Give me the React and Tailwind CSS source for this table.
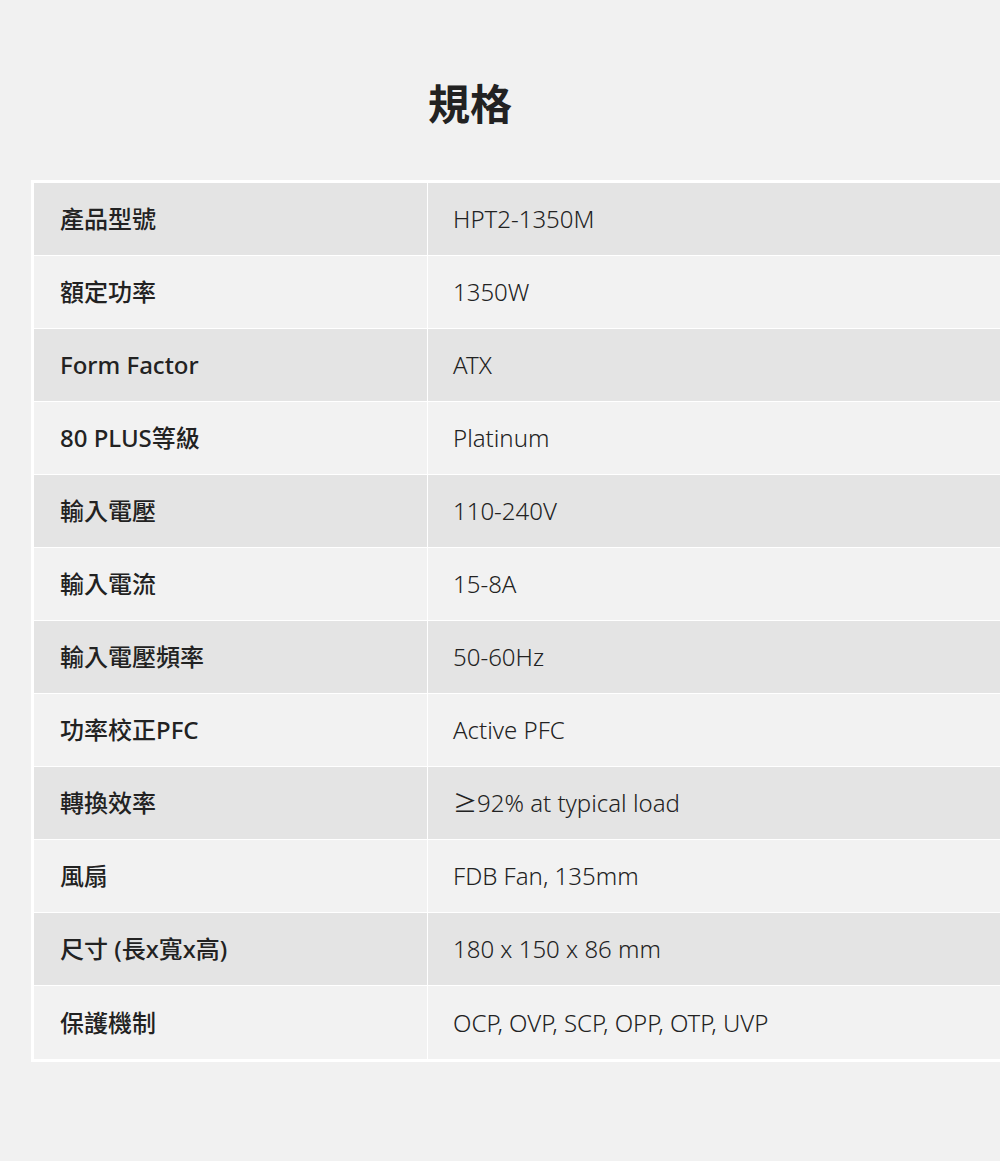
const specs = [
  ["產品型號", "HPT2-1350M"],
  ["額定功率", "1350W"],
  ["Form Factor", "ATX"],
  ["80 PLUS等級", "Platinum"],
  ["輸入電壓", "110-240V"],
  ["輸入電流", "15-8A"],
  ["輸入電壓頻率", "50-60Hz"],
  ["功率校正PFC", "Active PFC"],
  ["轉換效率", "≥92% at typical load"],
  ["風扇", "FDB Fan, 135mm"],
  ["尺寸 (長x寬x高)", "180 x 150 x 86 mm"],
  ["保護機制", "OCP, OVP, SCP, OPP, OTP, UVP"],
];

function App() {
  return (
    <div
      className="w-full h-[1161px] overflow-hidden bg-[#f1f1f1] text-[#222]"
      style={{ fontFamily: '"Noto Sans", "Noto Sans CJK TC", sans-serif' }}
    >
      {/* Title */}
      <div className="w-[940px] pt-[76px] h-[180px]">
        <h1 className="text-center text-[42px] leading-[56px] font-bold">規格</h1>
      </div>

      {/* Spec table */}
      <div className="ml-[31px] w-[1000px] border-[3px] border-white">
        {specs.map(([label, value], i) => (
          <div
            key={label}
            className={`flex h-[73px] ${i < specs.length - 1 ? "border-b border-white" : ""} ${
              i % 2 === 0 ? "bg-[#e4e4e4]" : "bg-[#f2f2f2]"
            }`}
          >
            <div className="w-[393px] flex items-center pl-[26px] text-[24px] font-medium">
              {label}
            </div>
            <div className="flex-1 flex items-center pl-[25px] border-l border-white text-[24px] font-[350]">
              {value}
            </div>
          </div>
        ))}
      </div>
    </div>
  );
}

export default App;
